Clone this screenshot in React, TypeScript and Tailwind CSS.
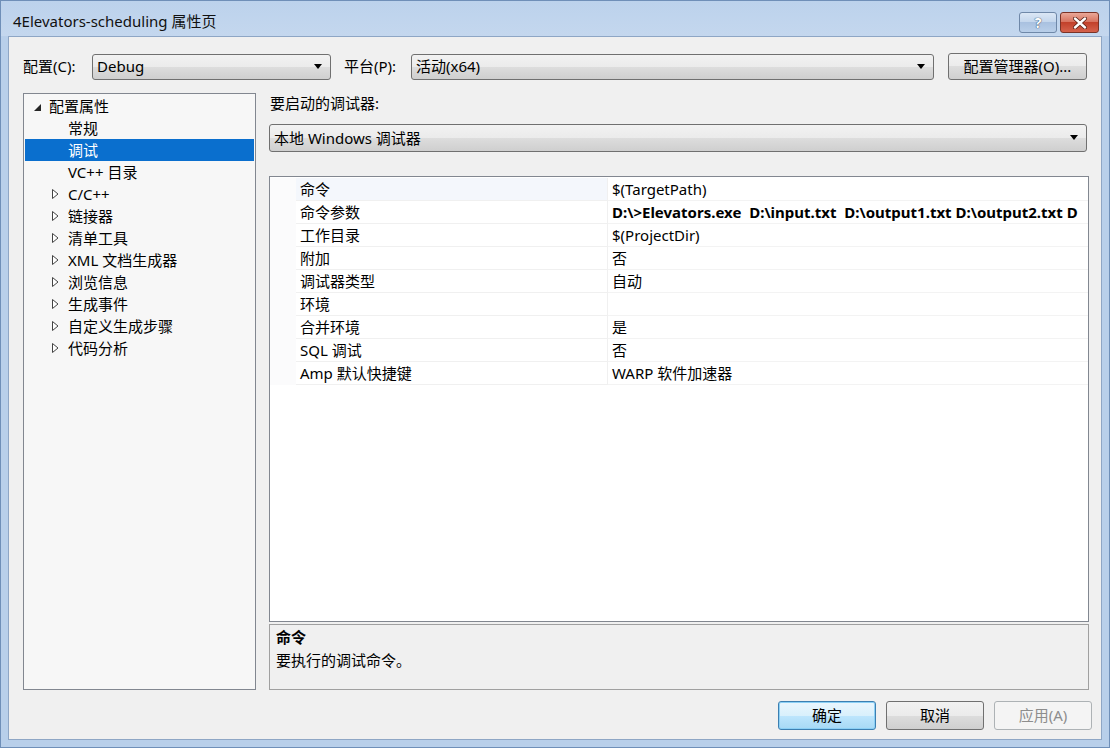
import React from "react";

function Arrow() {
  return (
    <svg width="8" height="5" viewBox="0 0 8 5" className="shrink-0">
      <path d="M0 0 H8 L4 5 Z" fill="#000" />
    </svg>
  );
}

function Combo({ text, className }: { text: string; className: string }) {
  return (
    <div
      className={
        "flex items-center rounded-[3px] border border-[#707070] bg-[linear-gradient(#f2f2f2,#ebebeb_50%,#dddddd_50%,#cfcfcf)] pl-[4px] pr-[8px] " +
        className
      }
    >
      <span className="flex-1 whitespace-nowrap">{text}</span>
      <Arrow />
    </div>
  );
}

function CollapsedTri() {
  return (
    <svg width="7" height="10" viewBox="0 0 7 10" className="shrink-0">
      <path d="M0.5 0.5 L6 5 L0.5 9.5 Z" fill="#fff" stroke="#444" strokeWidth="1" />
    </svg>
  );
}

function ExpandedTri() {
  return (
    <svg width="7" height="7" viewBox="0 0 7 7" className="shrink-0">
      <path d="M7 0 L7 7 L0 7 Z" fill="#262626" />
    </svg>
  );
}

const treeChildren: { label: string; expandable: boolean; selected?: boolean }[] = [
  { label: "常规", expandable: false },
  { label: "调试", expandable: false, selected: true },
  { label: "VC++ 目录", expandable: false },
  { label: "C/C++", expandable: true },
  { label: "链接器", expandable: true },
  { label: "清单工具", expandable: true },
  { label: "XML 文档生成器", expandable: true },
  { label: "浏览信息", expandable: true },
  { label: "生成事件", expandable: true },
  { label: "自定义生成步骤", expandable: true },
  { label: "代码分析", expandable: true },
];

const props: { name: string; value: string; bold?: boolean; first?: boolean }[] = [
  { name: "命令", value: "$(TargetPath)", first: true },
  {
    name: "命令参数",
    value: "D:\\>Elevators.exe  D:\\input.txt  D:\\output1.txt D:\\output2.txt D",
    bold: true,
  },
  { name: "工作目录", value: "$(ProjectDir)" },
  { name: "附加", value: "否" },
  { name: "调试器类型", value: "自动" },
  { name: "环境", value: "" },
  { name: "合并环境", value: "是" },
  { name: "SQL 调试", value: "否" },
  { name: "Amp 默认快捷键", value: "WARP 软件加速器" },
];

export default function App() {
  return (
    <div className="w-[1110px] h-[748px] flex flex-col bg-[#b8cfea] font-['Noto_Sans','Noto_Sans_CJK_SC',sans-serif] text-[15px] text-black overflow-hidden border border-[#6f8fb8]">
      {/* Title bar */}
      <div className="h-[35px] shrink-0 flex items-start bg-[linear-gradient(#bcd2ec,#c4d7ee)]">
        <div className="pl-[12px] pt-[9px] text-[15px] leading-[22px] text-[#111] flex-1 whitespace-nowrap">
          4Elevators-scheduling 属性页
        </div>
        <div className="flex pt-[11px] pr-[10px] gap-[3px]">
          <div className="w-[38px] h-[21px] rounded-[3px] border border-[#6f88a8] bg-[linear-gradient(#dbe7f5,#c2d5ec_50%,#a9c1e0_50%,#b9cfe9)] flex items-center justify-center">
            <span className="text-[14px] font-bold leading-none text-white [text-shadow:0_0_1px_#2d4666,0_0_1px_#2d4666]">
              ?
            </span>
          </div>
          <div className="w-[39px] h-[21px] rounded-[3px] border border-[#7a3327] bg-[linear-gradient(#eaa898,#d66f5b_50%,#c2412b_50%,#d5624c)] flex items-center justify-center">
            <svg width="14" height="12" viewBox="0 0 14 12">
              <path d="M2 1.5 L12 10.5 M12 1.5 L2 10.5" stroke="#5a1f14" strokeWidth="4" strokeLinecap="round" />
              <path d="M2 1.5 L12 10.5 M12 1.5 L2 10.5" stroke="#fff" strokeWidth="2.4" strokeLinecap="round" />
            </svg>
          </div>
        </div>
      </div>

      {/* Client area */}
      <div className="flex-1 mx-[7px] mb-[7px] bg-[#f0f0f0] border border-[#8ea6c5] flex flex-col pl-[14px] pr-[8px]">
        {/* Config row */}
        <div className="flex items-center mt-[16px] h-[27px]">
          <span className="w-[69px] whitespace-nowrap">配置(C):</span>
          <Combo text="Debug" className="w-[239px] h-[26px]" />
          <span className="ml-[13px] w-[67px] whitespace-nowrap">平台(P):</span>
          <Combo text="活动(x64)" className="w-[523px] h-[26px]" />
          <div className="ml-[14px] w-[139px] h-[27px] rounded-[3px] border border-[#707070] bg-[linear-gradient(#f2f2f2,#ebebeb_50%,#dddddd_50%,#cfcfcf)] flex items-center justify-center whitespace-nowrap">
            配置管理器(O)...
          </div>
        </div>

        {/* Main */}
        <div className="flex mt-[13px] h-[597px]">
          {/* Tree */}
          <div className="w-[233px] h-full border border-[#828790] bg-[#f7f7f7] pt-[1px] px-[1px]">
            <div className="h-[22px] flex items-center">
              <div className="w-[24px] flex justify-end pr-[8px] pt-[2px]">
                <ExpandedTri />
              </div>
              <span className="whitespace-nowrap">配置属性</span>
            </div>
            {treeChildren.map((c) => (
              <div
                key={c.label}
                className={
                  "h-[22px] flex items-center " +
                  (c.selected ? "bg-[#0a6fce] text-white" : "")
                }
              >
                <div className="w-[43px] flex justify-start pl-[27px]">
                  {c.expandable ? <CollapsedTri /> : null}
                </div>
                <span className="whitespace-nowrap">{c.label}</span>
              </div>
            ))}
          </div>

          {/* Right */}
          <div className="ml-[13px] w-[820px] flex flex-col">
            <div className="h-[20px] leading-[20px] pl-[1px] whitespace-nowrap">要启动的调试器:</div>
            <Combo text="本地 Windows 调试器" className="mt-[11px] w-[818px] h-[28px] pl-[4px]" />

            {/* Grid */}
            <div className="mt-[24px] h-[447px] border border-[#828790] bg-white pt-[1px] overflow-hidden">
              {props.map((p) => (
                <div key={p.name} className="h-[23px] flex">
                  <div className="w-[26px] shrink-0 bg-[#fbfbfc]" />
                  <div
                    className={
                      "w-[312px] shrink-0 pl-[4px] leading-[22px] whitespace-nowrap border-r border-b border-[#f0f0f0] " +
                      (p.first ? "bg-[#f4f7fc]" : "")
                    }
                  >
                    {p.name}
                  </div>
                  <div
                    className={
                      "flex-1 min-w-0 pl-[4px] leading-[22px] whitespace-pre overflow-hidden border-b border-[#f3f3f3] " +
                      (p.bold ? "font-bold" : "")
                    }
                  >
                    {p.value}
                  </div>
                </div>
              ))}
            </div>

            {/* Description */}
            <div className="mt-[2px] h-[66px] border border-[#a0a0a0] bg-[#f0f0f0] pl-[6px] pt-[1px]">
              <div className="leading-[23px] font-bold">命令</div>
              <div className="leading-[23px]">要执行的调试命令。</div>
            </div>
          </div>
        </div>

        {/* Buttons */}
        <div className="flex justify-end mt-[11px] gap-[10px] mr-[1px]">
          <div className="w-[98px] h-[29px] rounded-[3px] border border-[#3c7fb1] bg-[linear-gradient(#eaf6fd,#d9f0fc_50%,#bee6fd_50%,#a7d9f5)] shadow-[inset_0_0_0_1px_#8cd0f5] flex items-center justify-center">
            确定
          </div>
          <div className="w-[98px] h-[29px] rounded-[3px] border border-[#707070] bg-[linear-gradient(#f2f2f2,#ebebeb_50%,#dddddd_50%,#cfcfcf)] flex items-center justify-center">
            取消
          </div>
          <div className="w-[98px] h-[29px] rounded-[3px] border border-[#adb2b5] bg-[#f4f4f4] text-[#8d8d8d] flex items-center justify-center">
            应用(A)
          </div>
        </div>
      </div>
    </div>
  );
}
